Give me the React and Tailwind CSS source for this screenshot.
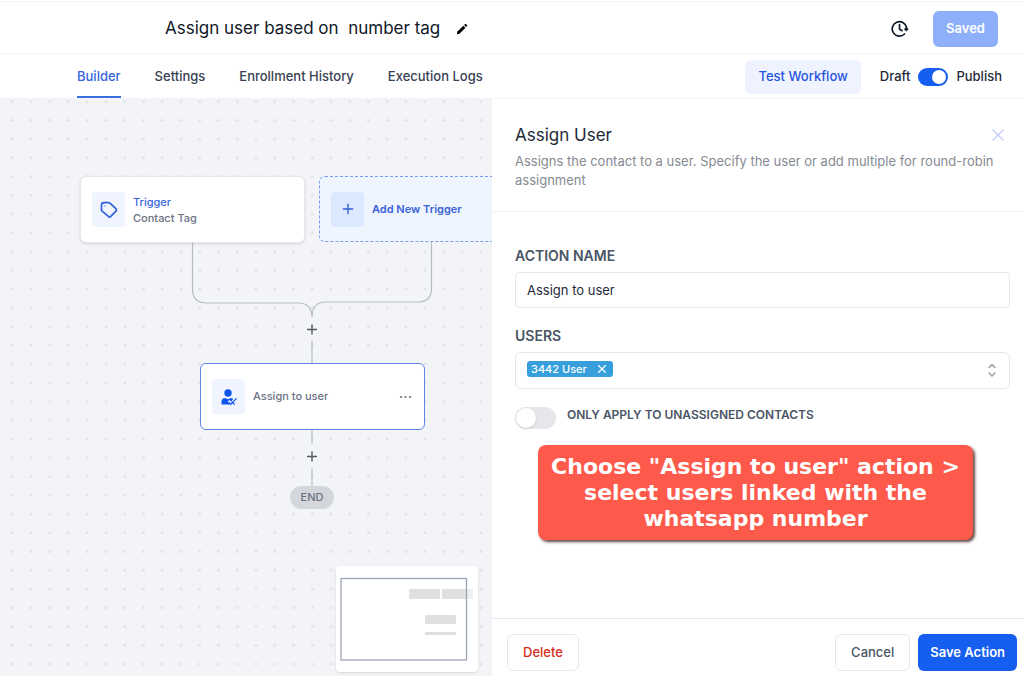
import React, { useState } from 'react';
import { Plus, X } from 'lucide-react';

const TABS = ['Builder', 'Settings', 'Enrollment History', 'Execution Logs'];

function PencilIcon() {
    return (
        <svg width="12" height="12" viewBox="0 0 14 14" fill="currentColor">
            <path d="M1 13l.6-3L8.600 3.200l2.400 2.300L4 12.400z" />
            <path d="M9.400 2.400l1-1c.4-.4 1-.4 1.400 0l.9.9c.4.4.4 1 0 1.400l-.9.9z" />
        </svg>
    );
}

function HistoryIcon() {
    return (
        <svg width="18" height="18" viewBox="0 0 18 18" fill="none" stroke="currentColor" strokeWidth="1.700" strokeLinecap="round">
            <path d="M13.500 14A7.200 7.200 0 1 1 15.500 7.500" />
            <path d="M8.500 4.500V9l2.500 1.700" />
            <path d="M13.200 9.200L15.400 7.200L17.400 9.200L15.400 11z" fill="currentColor" strokeWidth="0.500" />
        </svg>
    );
}

function TagIcon() {
    return (
        <svg width="18" height="18" viewBox="0 0 18 18" fill="none" stroke="currentColor" strokeWidth="1.700" strokeLinejoin="round">
            <path d="M1.500 4.200c0-1.500 1-2.600 2.600-2.600h4.600c.5 0 1 .2 1.300.5l5.900 5.600c.7.700.7 1.700 0 2.400l-5.100 5.300c-.7.7-1.700.7-2.400 0L2.100 10.200c-.4-.4-.6-.8-.6-1.300z" />
            <circle cx="5" cy="5" r="0.500" strokeWidth="0.400" />
        </svg>
    );
}

function AssignIcon() {
    return (
        <svg width="18" height="18" viewBox="0 0 18 18" fill="currentColor">
            <circle cx="8" cy="5" r="3.700" />
            <path d="M1.500 16.500v-2.700c0-2.200 1.500-3.800 3.700-3.800.9.6 1.800.9 2.800.9s1.900-.3 2.800-.9c1 .1 1.800.5 2.400 1.100L11 13.500l-1.600-1.400-1.700 1.400 2.600 3z" />
            <path d="M8.600 14.200l2.200 2.200L16.500 10.300M11.500 13.500l3.200 3" fill="none" stroke="currentColor" strokeWidth="1.200" />
        </svg>
    );
}

function Header({ published, setPublished }) {
    return (
        <header className="pt-px bg-white">
            <div className="flex items-center justify-between h-[53px] pt-0.5 pl-[165px] pr-[26px] border-y border-gray-100">
                <div className="flex items-center gap-4">
                    <h1 className="text-[17px] text-gray-900 whitespace-pre">{'Assign user based on  number tag'}</h1>
                    <button aria-label="Rename" className="text-black">
                        <PencilIcon />
                    </button>
                </div>
                <div className="flex items-center gap-6">
                    <button aria-label="Version history" className="text-gray-900">
                        <HistoryIcon />
                    </button>
                    <button className="h-9 px-[13px] rounded-md bg-[#8eb0fb] text-white text-[13px] font-semibold">Saved</button>
                </div>
            </div>

            <div className="flex items-center justify-between h-[45px] pl-[77px] pr-[22px] border-b border-gray-100">
                <nav className="flex gap-[34px] self-stretch">
                    {TABS.map((tab, i) => (
                        <a
                            key={tab}
                            href="#"
                            className={`flex items-center border-b-2 pt-1 text-[13px] font-medium ${i === 0
                                ? 'border-[#3b6fe0] text-[#3366e0]'
                                : 'border-transparent text-gray-700'
                                }`}
                        >
                            {tab}
                        </a>
                    ))}
                </nav>
                <div className="flex items-center pt-px">
                    <button className="h-[34px] px-[13px] rounded-md bg-[#eff3ff] text-[#1f55e0] text-[13px] font-medium mr-[19px]">Test Workflow</button>
                    <label className="flex items-center gap-2 text-[13px] font-medium text-gray-800">
                        Draft
                        <input
                            type="checkbox"
                            checked={published}
                            onChange={(e) => setPublished(e.target.checked)}
                            className="peer sr-only"
                        />
                        <span className="flex items-center w-[30px] h-[18px] px-0.5 rounded-full bg-gray-300 peer-checked:bg-[#155eef] peer-checked:justify-end">
                            <span className="size-3.5 rounded-full bg-white" />
                        </span>
                        Publish
                    </label>
                </div>
            </div>
        </header>
    );
}

function Canvas() {
    return (
        <main className="relative flex-1 overflow-hidden bg-[#f2f4f8]">
            {/* Dot grid and connectors */}
            <svg className="absolute inset-0 w-full h-full" fill="none">
                <defs>
                    <pattern id="dots" width="75" height="75" patternUnits="userSpaceOnUse">
                        {[2.500, 21.250, 40, 58.750].map((y) =>
                            [12.250, 31, 49.750, 68.500].map((x) => (
                                <circle key={`${x}-${y}`} cx={x} cy={y} r="1.600" fill="#e2e4e9" />
                            ))
                        )}
                    </pattern>
                </defs>
                <rect width="100%" height="100%" fill="url(#dots)" />
                <g stroke="#b8bbc1" strokeWidth="1.200">
                    <path d="M192.500 144v46q0 14 14 14h92q13 0 13.500 14" />
                    <path d="M431.500 143v47q0 13 -14 13h-92q-13 0 -13.500 15" />
                    <path d="M312 242v23M312 331v14M312 369v18" />
                </g>
                <path d="M307 230.500h10M312 225.500v10M307 357.500h10M312 352.500v10" stroke="#555960" strokeWidth="1.400" />
            </svg>

            {/* Nodes */}
            <div className="absolute left-20 top-[77px] flex items-center gap-2 w-[225px] h-[67px] px-[11px] rounded-md border border-gray-200 bg-white shadow-sm">
                <div className="flex items-center justify-center w-[33px] h-[35px] rounded bg-[#eff4ff] text-[#2f63dc]">
                    <TagIcon />
                </div>
                <div className="text-[11px] leading-4 font-medium">
                    <div className="text-[#3a68e0]">Trigger</div>
                    <div className="text-gray-500">Contact Tag</div>
                </div>
            </div>

            <button className="absolute left-[319px] top-[77px] flex items-center gap-2 w-[225px] h-[66px] px-[11px] rounded-md border border-dashed border-[#7a9cf0] bg-[#eff5ff]">
                <span className="flex items-center justify-center w-[33px] h-[35px] rounded bg-[#dbe8ff] text-[#2f5fd0]">
                    <Plus size={16} strokeWidth={2} />
                </span>
                <span className="text-[11px] font-semibold text-[#3a62d8]">Add New Trigger</span>
            </button>

            <div className="absolute left-[200px] top-[264px] flex items-center gap-2 w-[225px] h-[67px] px-[11px] rounded-md border border-[#5f86e6] bg-white">
                <div className="flex items-center justify-center w-[33px] h-[35px] rounded bg-[#eff4ff] text-[#0f55ee]">
                    <AssignIcon />
                </div>
                <span className="flex-1 text-[11px] font-medium text-gray-500">Assign to user</span>
                <button aria-label="More" className="text-gray-500">
                    <svg width="14" height="4" viewBox="0 0 14 4" fill="currentColor">
                        <circle cx="2" cy="2" r="1.100" />
                        <circle cx="6.500" cy="2" r="1.100" />
                        <circle cx="11" cy="2" r="1.100" />
                    </svg>
                </button>
            </div>

            <div className="absolute left-[290px] top-[387px] w-11 h-[23px] rounded-full bg-[#d3d6db] text-center text-[11px] leading-[23px] font-medium text-gray-500">END</div>

            {/* Minimap */}
            <div className="absolute right-3.5 bottom-1 bg-white rounded shadow">
                <svg width="142" height="106" viewBox="0 0 142 106" fill="none">
                    <g fill="#e0e0e0">
                        <rect x="73" y="23" width="31" height="10" rx="1" />
                        <rect x="106" y="23" width="31" height="10" rx="1" />
                        <rect x="89" y="49" width="31" height="9" rx="1" />
                        <rect x="89" y="66" width="31" height="3" />
                    </g>
                    <rect x="131" y="20" width="8" height="16" fill="white" fillOpacity="0.500" />
                    <rect x="5" y="12.500" width="125.500" height="81.500" stroke="#9aa5b4" strokeWidth="1.300" />
                </svg>
            </div>
        </main>
    );
}

function ActionPanel() {
    const [name, setName] = useState('Assign to user');
    const [unassigned, setUnassigned] = useState(false);

    return (
        <aside className="flex flex-col w-[532px] shrink-0 bg-white">
            <div className="pt-6 pb-[21px] pl-[23px] pr-4 border-b border-gray-100">
                <div className="flex items-center justify-between">
                    <h2 className="text-[17px] leading-6 text-gray-800">Assign User</h2>
                    <button aria-label="Close" className="text-[#c9d3fb]">
                        <X size={20} strokeWidth={2} />
                    </button>
                </div>
                <p className="mt-[5px] text-[13px] leading-[19px] text-[#858a92]">
                    Assigns the contact to a user. Specify the user or add multiple for round-robin assignment
                </p>
            </div>

            <div className="flex-1 pt-[34px] pl-[23px] pr-3.5">
                <label htmlFor="action-name" className="block text-sm font-semibold text-gray-600">ACTION NAME</label>
                <input
                    id="action-name"
                    value={name}
                    onChange={(e) => setName(e.target.value)}
                    className="block mt-1.5 w-full h-9 px-[11px] rounded border border-gray-200 text-[13px] text-gray-800"
                />

                <div className="mt-[18px] text-sm font-semibold text-gray-600">USERS</div>
                <div className="flex items-start justify-between mt-1.5 h-[37px] pl-[11px] pr-3 pt-2 rounded-md border border-gray-200">
                    <span className="flex items-center gap-2 h-4 px-1 rounded-[3px] bg-[#37a0dc] text-white text-[11px] font-medium">
                        3442 User
                        <button aria-label="Remove 3442 User">
                            <X size={14} strokeWidth={2} />
                        </button>
                    </span>
                    <button aria-label="Show users" className="text-gray-400">
                        <svg width="10" height="18" viewBox="0 0 10 18" fill="none" stroke="currentColor" strokeWidth="1.500" strokeLinecap="round" strokeLinejoin="round">
                            <path d="M2 6.500l3-3 3 3M2 12l3 3 3-3" />
                        </svg>
                    </button>
                </div>

                <label className="flex items-start gap-[11px] mt-[18px] text-xs font-semibold text-gray-600">
                    <input
                        type="checkbox"
                        checked={unassigned}
                        onChange={(e) => setUnassigned(e.target.checked)}
                        className="peer sr-only"
                    />
                    <span className="flex items-center w-[41px] h-[22px] px-px rounded-full bg-gray-200 peer-checked:bg-[#155eef] peer-checked:justify-end">
                        <span className="size-5 rounded-full bg-white shadow-sm" />
                    </span>
                    ONLY APPLY TO UNASSIGNED CONTACTS
                </label>

                <div className="w-[435px] mt-4 ml-[23px] pt-[9px] pb-2 rounded-lg bg-[#fe5a4c] shadow-[2px_2px_3px_rgba(60,20,20,0.8)] text-center font-['DejaVu_Sans',sans-serif] text-[22px] leading-[26px] font-bold text-white">
                    Choose "Assign to user" action &gt;<br />
                    select users linked with the<br />
                    whatsapp number
                </div>
            </div>

            <div className="flex items-center gap-2 h-[58px] pt-2.5 pl-[15px] pr-[7px] border-t border-gray-200 text-[13px] font-medium">
                <button className="h-[37px] px-[15px] rounded-md border border-gray-200 text-[#d92d20] mr-auto">Delete</button>
                <button className="h-[37px] px-[15px] rounded-md border border-gray-200 text-gray-600">Cancel</button>
                <button className="h-[37px] px-3 rounded-md bg-[#155eef] font-semibold text-white">Save Action</button>
            </div>
        </aside>
    );
}

export default function App() {
    const [published, setPublished] = useState(true);

    return (
        <div className="flex flex-col min-h-screen bg-white font-['Inter',sans-serif]">
            <Header published={published} setPublished={setPublished} />
            <div className="flex flex-1">
                <Canvas />
                <ActionPanel />
            </div>
        </div>
    );
}
